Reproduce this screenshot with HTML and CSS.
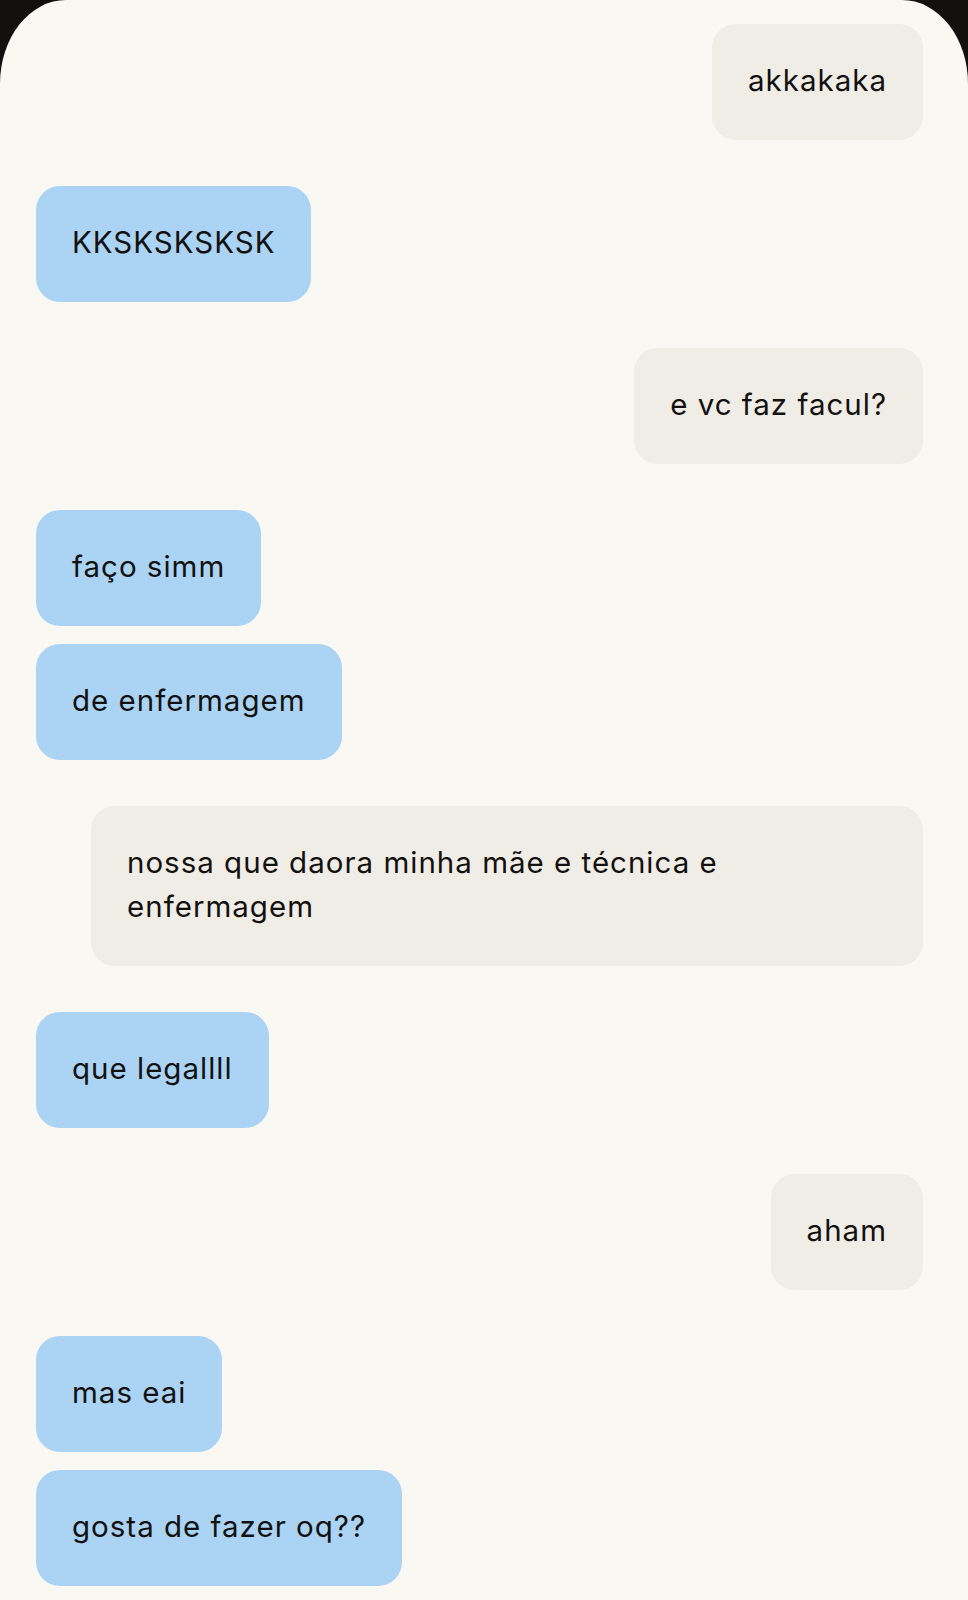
FILE: index.html
```html
<!DOCTYPE html>
<html lang="pt-BR">
<head>
<meta charset="utf-8">
<title>Chat</title>
<link rel="stylesheet" href="styles.css">
</head>
<body>
<main class="screen">
  <div class="thread">
    <div class="msg me">akkakaka</div>
    <div class="msg them new">KKSKSKSKSK</div>
    <div class="msg me new">e vc faz facul?</div>
    <div class="msg them new">faço simm</div>
    <div class="msg them">de enfermagem</div>
    <div class="msg me new wide"><span class="wrap">nossa que daora minha mãe e técnica e enfermagem</span></div>
    <div class="msg them new">que legallll</div>
    <div class="msg me new">aham</div>
    <div class="msg them new">mas eai</div>
    <div class="msg them">gosta de fazer oq??</div>
  </div>
</main>
</body>
</html>
```
FILE: styles.css
```css
html, body {
  margin: 0;
  padding: 0;
  background: #121110;
}
.screen {
  background: #faf8f3;
  border-radius: 66px 66px 0 0 / 84px 84px 0 0;
  min-height: 1600px;
  box-sizing: border-box;
  padding: 24px 45px 0 36px;
  font-family: "Inter", "Liberation Sans", sans-serif;
  font-size: 29.5px;
  line-height: 44px;
  letter-spacing: 1px;
  color: #121110;
}
.thread {
  display: flex;
  flex-direction: column;
}
.msg {
  padding: 34px 36px 38px;
  border-radius: 24px;
  margin-top: 18px;
  white-space: nowrap;
}
.msg:first-child { margin-top: 0; }
.msg.new { margin-top: 46px; }
.msg.me:first-child { margin-top: 0; }
.me {
  align-self: flex-end;
  background: #f0ece6;
}
.them {
  align-self: flex-start;
  background: #abd3f3;
}
.wide {
  width: 760px;
  white-space: normal;
}
.wrap {
  display: block;
  max-width: 600px;
}
```
